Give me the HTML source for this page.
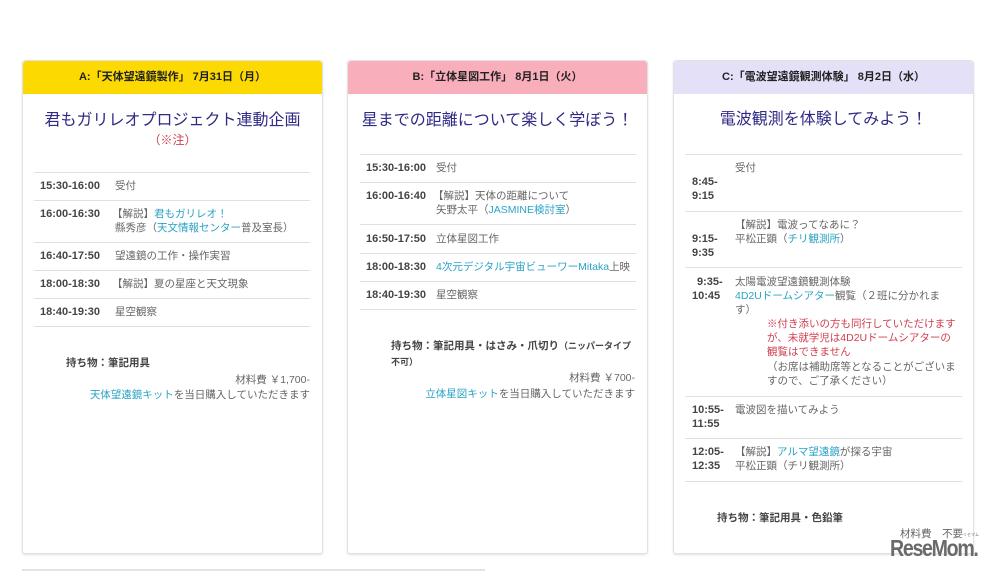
<!DOCTYPE html>
<html><head><meta charset="utf-8"><style>
*{margin:0;padding:0;box-sizing:border-box}
body{width:1000px;height:572px;background:#fff;position:relative;overflow:hidden;font-family:"Liberation Sans","Noto Sans CJK JP",sans-serif;color:#666;font-size:10.5px}
.card{position:absolute;top:60px;height:494px;width:301px;border:1px solid #e2e2e2;border-radius:3px;box-shadow:0 1px 2px rgba(0,0,0,.12);background:#fff}
.hd{position:absolute;left:0;top:0;right:0;height:33px;font-weight:bold;color:#222;font-size:11px;text-align:center;line-height:33px;border-radius:3px 3px 0 0}
.t{position:absolute;white-space:nowrap;line-height:14px}
.tm{font-weight:bold;color:#444;font-size:11px}
.ln{position:absolute;height:1px;background:#e0e0e0}
.ttl{position:absolute;color:#2f2a86;font-size:16px;white-space:nowrap;text-align:center;line-height:20px}
.b{color:#2aa3c4}
.r{color:#d04050}
.k{font-weight:bold;color:#444}
</style></head><body>

<div class="card" style="left:22px"><div class="hd" style="background:#fcd900">A:「天体望遠鏡製作」 7月31日（月）</div></div>
<div class="card" style="left:347px"><div class="hd" style="background:#f9aebb">B:「立体星図工作」 8月1日（火）</div></div>
<div class="card" style="left:673px"><div class="hd" style="background:#e4e0f8">C:「電波望遠鏡観測体験」 8月2日（水）</div></div>

<!-- Card A -->
<div class="ttl" style="left:22px;width:301px;top:111px">君もガリレオプロジェクト連動企画</div>
<div class="t r" style="left:22px;width:301px;text-align:center;top:133px;font-size:12px">（※注）</div>
<div class="ln" style="left:34px;width:276px;top:172px"></div>
<div class="ln" style="left:34px;width:276px;top:200px"></div>
<div class="ln" style="left:34px;width:276px;top:242px"></div>
<div class="ln" style="left:34px;width:276px;top:270px"></div>
<div class="ln" style="left:34px;width:276px;top:298px"></div>
<div class="ln" style="left:34px;width:276px;top:326px"></div>
<div class="t tm" style="left:40px;top:179px">15:30-16:00</div><div class="t" style="left:115px;top:179px">受付</div>
<div class="t tm" style="left:40px;top:207px">16:00-16:30</div><div class="t" style="left:112px;top:207px">【解説】<span class="b">君もガリレオ！</span></div>
<div class="t" style="left:115px;top:221px">縣秀彦（<span class="b">天文情報センター</span>普及室長）</div>
<div class="t tm" style="left:40px;top:249px">16:40-17:50</div><div class="t" style="left:115px;top:249px">望遠鏡の工作・操作実習</div>
<div class="t tm" style="left:40px;top:277px">18:00-18:30</div><div class="t" style="left:112px;top:277px">【解説】夏の星座と天文現象</div>
<div class="t tm" style="left:40px;top:305px">18:40-19:30</div><div class="t" style="left:115px;top:305px">星空観察</div>
<div class="t k" style="left:66px;top:356px">持ち物：筆記用具</div>
<div class="t" style="right:690px;top:373px">材料費 ￥1,700-</div>
<div class="t" style="right:690px;top:388px"><span class="b">天体望遠鏡キット</span>を当日購入していただきます</div>

<!-- Card B -->
<div class="ttl" style="left:347px;width:301px;top:111px">星までの距離について楽しく学ぼう！</div>
<div class="ln" style="left:360px;width:276px;top:154px"></div>
<div class="ln" style="left:360px;width:276px;top:182px"></div>
<div class="ln" style="left:360px;width:276px;top:224px"></div>
<div class="ln" style="left:360px;width:276px;top:253px"></div>
<div class="ln" style="left:360px;width:276px;top:281px"></div>
<div class="ln" style="left:360px;width:276px;top:309px"></div>
<div class="t tm" style="left:366px;top:161px">15:30-16:00</div><div class="t" style="left:436px;top:161px">受付</div>
<div class="t tm" style="left:366px;top:189px">16:00-16:40</div><div class="t" style="left:433px;top:189px">【解説】天体の距離について</div>
<div class="t" style="left:436px;top:203px">矢野太平（<span class="b">JASMINE検討室</span>）</div>
<div class="t tm" style="left:366px;top:232px">16:50-17:50</div><div class="t" style="left:436px;top:232px">立体星図工作</div>
<div class="t tm" style="left:366px;top:260px">18:00-18:30</div><div class="t" style="left:436px;top:260px"><span class="b">4次元デジタル宇宙ビューワーMitaka</span>上映</div>
<div class="t tm" style="left:366px;top:288px">18:40-19:30</div><div class="t" style="left:436px;top:288px">星空観察</div>
<div class="t k" style="left:391px;top:339px">持ち物：筆記用具・はさみ・爪切り<span style="font-size:9px">（ニッパータイプ</span></div>
<div class="t k" style="left:391px;top:355px;font-size:9px">不可）</div>
<div class="t" style="right:365px;top:371px">材料費 ￥700-</div>
<div class="t" style="right:365px;top:387px"><span class="b">立体星図キット</span>を当日購入していただきます</div>

<!-- Card C -->
<div class="ttl" style="left:673px;width:301px;top:110px">電波観測を体験してみよう！</div>
<div class="ln" style="left:685px;width:277px;top:154px"></div>
<div class="ln" style="left:685px;width:277px;top:211px"></div>
<div class="ln" style="left:685px;width:277px;top:267px"></div>
<div class="ln" style="left:685px;width:277px;top:396px"></div>
<div class="ln" style="left:685px;width:277px;top:438px"></div>
<div class="ln" style="left:685px;width:277px;top:481px"></div>
<div class="t" style="left:735px;top:161px">受付</div>
<div class="t tm" style="left:692px;top:175px">8:45-</div><div class="t tm" style="left:692px;top:189px">9:15</div>
<div class="t" style="left:735px;top:218px">【解説】電波ってなあに？</div>
<div class="t" style="left:735px;top:232px">平松正顕（<span class="b">チリ観測所</span>）</div>
<div class="t tm" style="left:692px;top:232px">9:15-</div><div class="t tm" style="left:692px;top:246px">9:35</div>
<div class="t tm" style="left:697px;top:275px">9:35-</div><div class="t tm" style="left:692px;top:289px">10:45</div>
<div class="t" style="left:735px;top:275px">太陽電波望遠鏡観測体験</div>
<div class="t" style="left:735px;top:289px"><span class="b">4D2Uドームシアター</span>観覧（２班に分かれま</div>
<div class="t" style="left:735px;top:303px">す）</div>
<div class="t r" style="left:767px;top:317px">※付き添いの方も同行していただけます</div>
<div class="t r" style="left:767px;top:331px">が、未就学児は4D2Uドームシアターの</div>
<div class="t r" style="left:767px;top:345px">観覧はできません</div>
<div class="t" style="left:767px;top:360px">（お席は補助席等となることがございま</div>
<div class="t" style="left:767px;top:374px">すので、ご了承ください）</div>
<div class="t tm" style="left:692px;top:403px">10:55-</div><div class="t tm" style="left:692px;top:417px">11:55</div>
<div class="t" style="left:735px;top:403px">電波図を描いてみよう</div>
<div class="t tm" style="left:692px;top:445px">12:05-</div><div class="t tm" style="left:692px;top:459px">12:35</div>
<div class="t" style="left:735px;top:445px">【解説】<span class="b">アルマ望遠鏡</span>が探る宇宙</div>
<div class="t" style="left:735px;top:459px">平松正顕（チリ観測所）</div>
<div class="t k" style="left:717px;top:511px">持ち物：筆記用具・色鉛筆</div>
<div class="t" style="left:900px;top:527px">材料費　不要</div>

<div style="position:absolute;left:22px;top:569px;width:463px;height:2px;background:#e4e4e4"></div>

<div style="position:absolute;left:890px;top:536px;font-weight:bold;font-size:23px;color:#6a6a6a;letter-spacing:-1.5px;transform:scaleX(.85);transform-origin:left;line-height:24px;font-family:'Liberation Sans',sans-serif">ReseMom.</div>
<div style="position:absolute;left:963px;top:532px;font-size:4px;color:#777">リセマム</div>
</body></html>
